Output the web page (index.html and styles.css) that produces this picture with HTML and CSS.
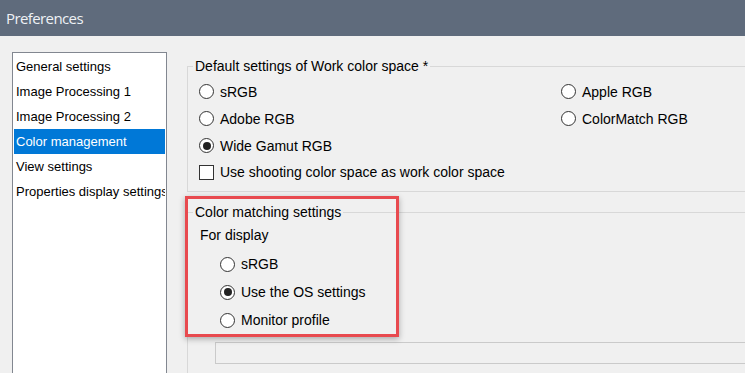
FILE: index.html
```html
<!DOCTYPE html>
<html>
<head>
<meta charset="utf-8">
<title>Preferences</title>
<link rel="stylesheet" href="styles.css">
</head>
<body>
<div class="titlebar">Preferences</div>
<div class="main">
  <ul class="list">
    <li>General settings</li>
    <li>Image Processing 1</li>
    <li>Image Processing 2</li>
    <li class="sel">Color management</li>
    <li>View settings</li>
    <li>Properties display settings</li>
  </ul>
  <div class="panel">
    <fieldset class="group g1">
      <legend>Default settings of Work color space *</legend>
      <div class="grid">
        <div class="opt"><span class="radio"></span>sRGB</div>
        <div class="opt"><span class="radio"></span>Apple RGB</div>
        <div class="opt"><span class="radio"></span>Adobe RGB</div>
        <div class="opt"><span class="radio"></span>ColorMatch RGB</div>
        <div class="opt"><span class="radio on"></span>Wide Gamut RGB</div>
        <div class="opt"></div>
        <div class="opt wide"><span class="check"></span>Use shooting color space as work color space</div>
      </div>
    </fieldset>
    <fieldset class="group g2">
      <legend>Color matching settings</legend>
      <div class="sub">For display</div>
      <div class="opts2">
        <div class="opt2"><span class="radio"></span>sRGB</div>
        <div class="opt2"><span class="radio on"></span>Use the OS settings</div>
        <div class="opt2"><span class="radio"></span>Monitor profile</div>
      </div>
      <div class="field"></div>
    </fieldset>
    <div class="highlight"></div>
  </div>
</div>
</body>
</html>
```

FILE: styles.css
```css
html, body {
  margin: 0;
  padding: 0;
}
body {
  width: 745px;
  height: 373px;
  overflow: hidden;
  background: #f0f0f0;
  font-family: "Liberation Sans", Arial, sans-serif;
  font-size: 13px;
  color: #000;
}
.titlebar {
  height: 36px;
  line-height: 36px;
  background: #5f6b7c;
  color: #eef1f5;
  font-family: "Open Sans", "Noto Sans", sans-serif;
  font-size: 15px;
  letter-spacing: -0.6px;
  padding-left: 6px;
  box-sizing: border-box;
}
.main {
  display: flex;
  padding: 16px 0 0 12px;
  height: 337px;
  box-sizing: border-box;
}
.list {
  list-style: none;
  margin: 0;
  padding: 1px;
  width: 151px;
  height: 340px;
  background: #fff;
  border: 1px solid #828790;
  overflow: hidden;
  flex: none;
}
.list li {
  height: 25px;
  line-height: 25px;
  padding-left: 2px;
  white-space: nowrap;
  overflow: hidden;
}
.list li.sel {
  background: #0078d7;
  color: #fff;
}
.panel {
  position: relative;
  margin-left: 20px;
  margin-top: 6px;
  width: 620px;
  flex: none;
  font-size: 14px;
}
.group {
  margin: 0;
  padding: 0;
  border: 1px solid #d8d8d8;
  min-width: 0;
}
.group legend {
  margin-left: 5px;
  padding: 0 2px;
  line-height: 16px;
}
.grid {
  display: grid;
  grid-template-columns: 362px auto;
  padding: 4px 0 6px 11px;
}
.opt {
  height: 27px;
  display: flex;
  align-items: center;
  gap: 6px;
}
.opt.wide {
  grid-column: 1 / 3;
  height: 26px;
}
.radio {
  width: 13px;
  height: 13px;
  border: 1px solid #333;
  border-radius: 50%;
  background: #fff;
  display: flex;
  align-items: center;
  justify-content: center;
  flex: none;
}
.radio.on::after {
  content: "";
  width: 8px;
  height: 8px;
  border-radius: 50%;
  background: #222;
}
.check {
  width: 13px;
  height: 13px;
  border: 1px solid #333;
  background: #fff;
  flex: none;
}
.g2 {
  margin-top: 12px;
  height: 200px;
  border-bottom: none;
}
.sub {
  margin: 7px 0 0 12px;
  line-height: 16px;
}
.opts2 {
  margin: 7px 0 0 32px;
}
.opt2 {
  height: 28px;
  display: flex;
  align-items: center;
  gap: 6px;
}
.field {
  margin: 8px 0 0 27px;
  height: 20px;
  border: 1px solid #cacaca;
  background: #f0f0f0;
}
.highlight {
  position: absolute;
  left: -2px;
  top: 138px;
  width: 208px;
  height: 135px;
  border: 3px solid #e84a4f;
  box-shadow: 0 2px 6px rgba(0, 0, 0, 0.3);
  pointer-events: none;
}
```
